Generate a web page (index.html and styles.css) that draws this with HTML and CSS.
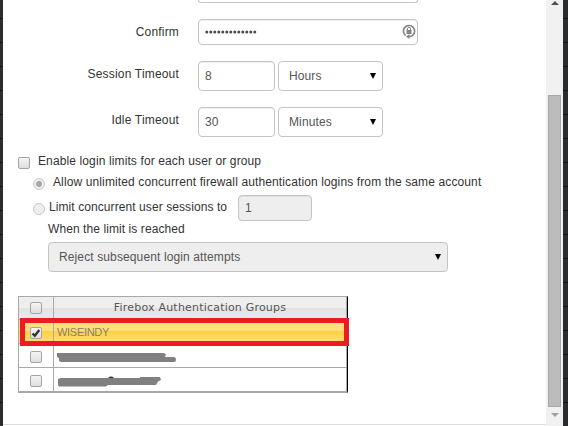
FILE: index.html
```html
<!DOCTYPE html>
<html lang="en">
<head>
<meta charset="utf-8">
<title>Authentication Settings</title>
<link rel="stylesheet" href="styles.css">
</head>
<body>
<div class="dialog">
  <main class="content">
    <div class="field field-cut"><span class="label"></span><div class="input wide"></div></div>
    <div class="field field-confirm"><span class="label">Confirm</span>
      <div class="input wide">
        <svg class="dots" width="54" height="4" viewBox="0 0 54 4" aria-label="password"><path d="M1.8 2h50" stroke="#4a4a4a" stroke-width="3" stroke-linecap="round" stroke-dasharray="0 4"/></svg>
        <svg class="lock" width="14" height="16" viewBox="0 0 14 16"><path d="M3.6 11.5A5.6 5.6 0 1 1 10.8 11.2Q9.4 12.6 7 12.6" fill="none" stroke="#858585" stroke-width="1.6"/><path d="M4 12.6 7.4 10v5z" fill="#858585"/><path d="M4.5 6h5v4h-5z" fill="#858585"/><path d="M5.5 6V4.8a1.5 1.5 0 0 1 3 0V6" fill="none" stroke="#858585"/></svg>
      </div>
    </div>
    <div class="field field-time"><span class="label">Session Timeout</span><div class="input num">8</div><div class="select unit"><span>Hours</span><i class="arrow"></i></div></div>
    <div class="field field-time"><span class="label">Idle Timeout</span><div class="input num">30</div><div class="select unit"><span>Minutes</span><i class="arrow"></i></div></div>

    <div class="option option-enable"><i class="check"></i><span class="text">Enable login limits for each user or group</span></div>
    <div class="option option-allow"><i class="radio on"></i><span class="text">Allow unlimited concurrent firewall authentication logins from the same account</span></div>
    <div class="option option-limit"><i class="radio"></i><span class="text">Limit concurrent user sessions to</span><div class="input count">1</div></div>
    <div class="when">When the limit is reached</div>
    <div class="select action"><span>Reject subsequent login attempts</span><i class="arrow"></i></div>

    <div class="groups">
      <div class="row head"><div class="cell"><i class="check"></i></div><div class="cell title"><span>Firebox Authentication Groups</span></div></div>
      <div class="row selected"><div class="cell"><i class="check"><svg width="12" height="12" viewBox="0 0 12 12"><path d="M2.5 6.5 4.8 8.8 9.3 3" fill="none" stroke="#333" stroke-width="2.4"/></svg></i></div><div class="cell name">WISEINDY</div></div>
      <div class="row"><div class="cell"><i class="check"></i></div><div class="cell"><svg class="scribble" width="121" height="12" viewBox="0 0 121 12"><path d="M0 1H107L109 2.5 108 5H117Q119 5 119 7.5T117 10H4L2 9V6L0 5z" fill="#808080"/></svg></div></div>
      <div class="row"><div class="cell"><i class="check"></i></div><div class="cell"><svg class="scribble" width="121" height="12" viewBox="0 0 121 12"><path d="M51 2Q54-.8 57 2" fill="#333"/><path d="M1 3 4 2H83V1H103L104 4 101 5.5 99 9H51L49 10.5H2L1 9z" fill="#808080"/></svg></div></div>
      <div class="highlight"></div>
    </div>
  </main>
  <div class="scrollbar"><i class="up"></i><div class="thumb"></div><i class="down"></i></div>
</div>
</body>
</html>
```
FILE: styles.css
```css
* { box-sizing: border-box; }
body {
  margin: 0;
  width: 568px;
  height: 426px;
  overflow: hidden;
  padding: 0 5px 0 3px;
  background: repeating-linear-gradient(#2b2c2e 0 18px, #141516 18px 19px, #2b2c2e 19px 24px);
  font: 12px/16px "Liberation Sans", Arial, sans-serif;
  letter-spacing: .12px;
  color: #333;
}
.dialog { display: flex; height: 426px; background: #fff; }
.content { width: 543px; height: 425px; border-bottom: 1px solid #ddd; }
.field { display: flex; align-items: flex-start; }
.field-cut { height: 19px; }
.field-cut .input { height: 3px; border-top: 0; border-radius: 0 0 4px 4px; box-shadow: none; }
.field-confirm { height: 42px; }
.field-time { height: 46px; }
.label { width: 176px; margin-right: 19px; padding-top: 5px; text-align: right; letter-spacing: .18px; }
.input, .select {
  display: flex;
  align-items: center;
  border: 1px solid #c4c4c4;
  border-radius: 4px;
  background: #fff;
  color: #555;
}
.input { padding-left: 6px; box-shadow: inset 0 1px 1px #0001; }
.wide { width: 220px; height: 26px; }
.dots { margin-top: -1px; }
.lock { margin: 0 1px 0 auto; }
.num { width: 77px; height: 30px; margin-right: 3px; }
.select { justify-content: space-between; height: 30px; padding: 0 6px 0 10px; }
.unit { width: 105px; }
.arrow { border: 3px solid transparent; border-top: 6px solid #000; border-bottom: 0; }
.option { display: flex; align-items: flex-start; }
.check {
  display: block;
  flex: none;
  width: 12px;
  height: 12px;
  border: 1px solid #a5a5a5;
  border-radius: 2px;
  background: linear-gradient(#f4f4f4, #dedede);
}
.check svg { display: block; margin: -1px; }
.radio {
  width: 12px;
  height: 12px;
  border: 1px solid #c8c8c8;
  border-radius: 50%;
  background: #eee;
}
.radio.on { background: radial-gradient(circle, #a8a8a8 0 2.7px, #eee 3.3px); }
.option-enable { height: 21px; padding-left: 15px; }
.option-enable .check { margin: 4px 8px 0 0; }
.option-allow { height: 21px; padding-left: 30px; }
.option-allow .radio { margin: 4px 8px 0 0; }
.option-limit { height: 26px; padding-left: 30px; }
.option-limit .radio { margin: 8px 4px 0 0; }
.option-limit .text { width: 189px; padding-top: 4px; letter-spacing: .08px; }
.count { width: 74px; height: 26px; background: #eee; }
.when { height: 21px; padding-left: 45px; letter-spacing: .08px; }
.action { width: 400px; margin-left: 45px; background: #eee; }
.groups {
  position: relative;
  width: 330px;
  height: 97px;
  margin: 24px 0 0 15px;
  border: 1px solid #a8a8a8;
  border-right-color: #000;
  border-bottom-width: 2px;
}
.row {
  display: grid;
  grid-template-columns: 35px 1fr;
  height: 24px;
  border-right: 1px solid #aaa;
  border-bottom: 1px solid #aaa;
}
.row:nth-child(4) { border-bottom: 0; height: 23px; }
.cell { display: flex; align-items: center; }
.cell:first-child { justify-content: center; border-right: 1px solid #aaa; }
.cell:last-child { padding-left: 3px; }
.head { height: 23px; background: linear-gradient(#eee 0 50%, #e2e2e2 50%, #eaeaea); }
.head .cell:last-child { justify-content: center; padding: 0; }
.title { font: 11px/14px "DejaVu Sans", sans-serif; letter-spacing: .2px; color: #555; }
.selected { background: linear-gradient(#ffe07c 0 50%, #ffd142 50%, #ffdf78); }
.selected .check { margin-top: 3px; }
.row:nth-child(n+3) .check { margin-top: 2px; }
.scribble { margin-top: 4px; }
.name { font-size: 11px; letter-spacing: -.3px; color: #887f66; }
.highlight {
  position: absolute;
  left: 1px;
  top: 21px;
  width: 329px;
  height: 28px;
  border: 5px solid #ed1c24;
}
.scrollbar {
  display: flex;
  flex-direction: column;
  align-items: center;
  width: 17px;
  height: 426px;
  background: #f1f1f1;
}
.up { margin-top: 1px; border: 4px solid transparent; border-top: 0; border-bottom: 4px solid #505050; }
.thumb { width: 13px; height: 312px; margin-top: 90px; border: 1px solid #a8a8a8; background: #bcbcbc; }
.down { margin-top: 6px; border: 4px solid transparent; border-bottom: 0; border-top: 4px solid #a0a0a0; }
```
